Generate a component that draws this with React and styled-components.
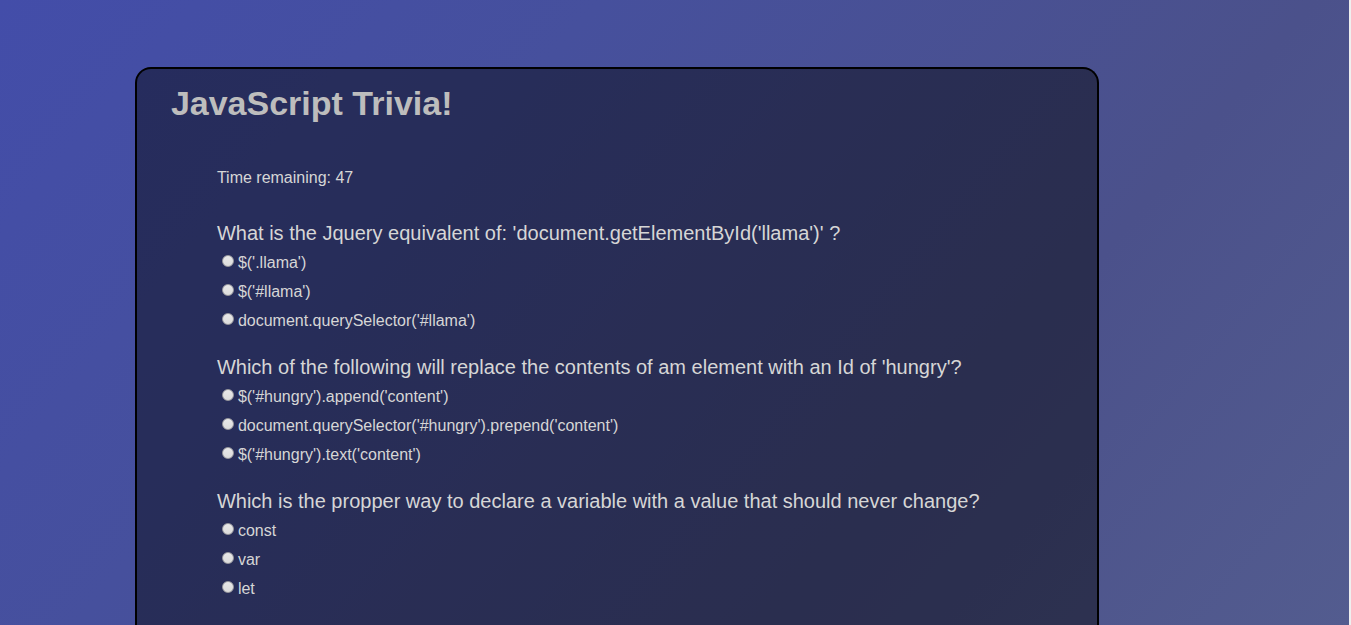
import React from "react";
import styled, { createGlobalStyle } from "styled-components";

const GlobalStyle = createGlobalStyle`
  html {
    background: #efefef;
  }
  body {
    margin: 0;
    font-family: "Liberation Sans", Arial, sans-serif;
    font-size: 16px;
    color: #d6d6d6;
  }
`;

const Page = styled.div`
  box-sizing: border-box;
  min-height: 100vh;
  margin-right: 2px;
  padding-top: 67px;
  display: flex;
  background: linear-gradient(130deg, #434da9 0%, #46509d 32%, #4b518b 70%, #535c8f 100%);
`;

const Panel = styled.main`
  box-sizing: border-box;
  width: calc(70% + 20px);
  margin-left: 10%;
  padding: 14px 34px 11px;
  border: 2px solid #000;
  border-bottom: 0;
  border-radius: 16px 16px 0 0;
  background: rgba(0, 0, 0, 0.43);
`;

const Title = styled.h1`
  margin: 0;
  font-size: 34px;
  line-height: 40px;
  color: #bdbdbd;
`;

const Quiz = styled.form`
  padding: 45px 46px 0;
`;

const Timer = styled.p`
  margin: 0 0 30px;
  line-height: 20px;
`;

const Question = styled.fieldset`
  margin: 0 0 17px;
  padding: 0;
  border: 0;
  min-width: 0;
`;

const Prompt = styled.legend`
  padding: 0;
  font-size: 20px;
  line-height: 30px;
`;

const Option = styled.label`
  display: flex;
  align-items: center;
  gap: 4px;
  padding-left: 5px;
  line-height: 29px;
`;

const Radio = styled.input`
  appearance: none;
  flex: none;
  box-sizing: border-box;
  width: 12px;
  height: 12px;
  margin: 0 0 3px;
  border: 1px solid #9a9a9f;
  border-radius: 50%;
  background: linear-gradient(#e8e8e8, #dcdcdc);

  &:checked {
    background: radial-gradient(#444 35%, #e0e0e0 40%);
  }
`;

const questions = [
  {
    prompt: "What is the Jquery equivalent of: 'document.getElementById('llama')' ?",
    options: ["$('.llama')", "$('#llama')", "document.querySelector('#llama')"],
  },
  {
    prompt: "Which of the following will replace the contents of am element with an Id of 'hungry'?",
    options: [
      "$('#hungry').append('content')",
      "document.querySelector('#hungry').prepend('content')",
      "$('#hungry').text('content')",
    ],
  },
  {
    prompt: "Which is the propper way to declare a variable with a value that should never change?",
    options: ["const", "var", "let"],
  },
];

export default function App() {
  return (
    <>
      <GlobalStyle />
      <Page>
        <Panel>
          <Title>JavaScript Trivia!</Title>
          <Quiz>
            <Timer>Time remaining: 47</Timer>
            {questions.map((question, index) => (
              <Question key={question.prompt}>
                <Prompt>{question.prompt}</Prompt>
                {question.options.map((option) => (
                  <Option key={option}>
                    <Radio type="radio" name={`question-${index}`} value={option} />
                    {option}
                  </Option>
                ))}
              </Question>
            ))}
          </Quiz>
        </Panel>
      </Page>
    </>
  );
}
